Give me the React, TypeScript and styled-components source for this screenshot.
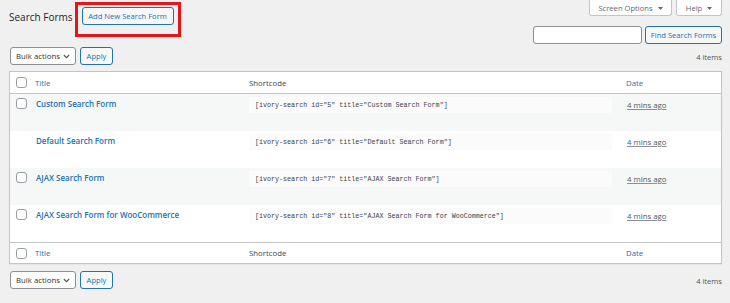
import React from "react";
import styled, { createGlobalStyle } from "styled-components";

const GlobalStyle = createGlobalStyle`
  html, body { margin: 0; padding: 0; background: #f0f0f1; }
  body {
    font-family: "Open Sans", "Noto Sans", sans-serif;
    color: #3c434a;
    font-size: 8px;
  }
  * { box-sizing: border-box; }
`

const forms = [
  { id: 5, title: "Custom Search Form", removable: true },
  { id: 6, title: "Default Search Form", removable: false },
  { id: 7, title: "AJAX Search Form", removable: true },
  { id: 8, title: "AJAX Search Form for WooCommerce", removable: true },
]

const Chevron = () => (
  <svg width="7" height="5" viewBox="0 0 7 5">
    <polyline points="0.8,1 3.5,3.7 6.2,1" fill="none" stroke="#50575e" strokeWidth="1.1" />
  </svg>
)

const Caret = () => (
  <svg width="5" height="3" viewBox="0 0 5 3">
    <polygon points="0,0 5,0 2.5,3" fill="#646970" />
  </svg>
)

const TableNav = ({ bottom }: { bottom?: boolean }) => (
  <NavRow $bottom={bottom}>
    <Select>
      Bulk actions <Chevron />
    </Select>
    <Button $w={33}>Apply</Button>
    <Count>4 items</Count>
  </NavRow>
)

const HeaderCells = () => (
  <>
    <CheckCell><Check /></CheckCell>
    <HeadCell $link>Title</HeadCell>
    <HeadCell>Shortcode</HeadCell>
    <HeadCell $link>Date</HeadCell>
  </>
)

const App = () => {
  return (
    <Page>
      <GlobalStyle />
      <Header>
        <TitleRow>
          <PageTitle>Search Forms</PageTitle>
          <Highlight>
            <Button $w={92}>Add New Search Form</Button>
          </Highlight>
        </TitleRow>
        <RightTools>
          <Tabs>
            <Tab $w={83}>Screen Options <Caret /></Tab>
            <Tab $w={46}>Help <Caret /></Tab>
          </Tabs>
          <SearchBox>
            <Input />
            <Button $w={77}>Find Search Forms</Button>
          </SearchBox>
        </RightTools>
      </Header>

      <TableNav />

      <Table>
        <HeadRow><HeaderCells /></HeadRow>
        {forms.map((f, i) => (
          <Row key={f.id} $striped={i % 2 === 0}>
            <CheckCell $top>{f.removable && <Check />}</CheckCell>
            <TitleCell>{f.title}</TitleCell>
            <CodeCell>
              <Code>[ivory-search id="{f.id}" title="{f.title}"]</Code>
            </CodeCell>
            <DateCell><Ago>4 mins ago</Ago></DateCell>
          </Row>
        ))}
        <HeadRow $foot><HeaderCells /></HeadRow>
      </Table>

      <TableNav bottom />
    </Page>
  )
}

const Page = styled.div`
  padding: 0 8px 0 9px;
`

const Header = styled.div`
  display: flex;
  justify-content: space-between;
  align-items: flex-start;
`

const TitleRow = styled.div`
  display: flex;
  align-items: flex-start;
`

const PageTitle = styled.h1`
  margin: 10px 2px 0 0;
  font-size: 10px;
  line-height: 14px;
  font-weight: 400;
  color: #1d2327;
`

const Highlight = styled.div`
  margin-top: 2px;
  border: 3px solid #e8141c;
  padding: 2px 4px 9px 4px;
`

const Button = styled.div<{ $w: number }>`
  width: ${p => p.$w}px;
  height: 18px;
  display: flex;
  align-items: center;
  justify-content: center;
  border: 1px solid #2271b1;
  border-radius: 3px;
  background: #f6f7f7;
  color: #2271b1;
  font-size: 7.6px;
  white-space: nowrap;
`

const RightTools = styled.div`
  display: flex;
  flex-direction: column;
  align-items: flex-end;
`

const Tabs = styled.div`
  display: flex;
  gap: 4px;
`

const Tab = styled.div<{ $w: number }>`
  width: ${p => p.$w}px;
  height: 16px;
  display: flex;
  align-items: center;
  justify-content: center;
  gap: 5px;
  background: #fff;
  border: 1px solid #c3c4c7;
  border-top: none;
  border-radius: 0 0 3px 3px;
  color: #646970;
  font-size: 7.6px;
  padding-top: 1px;
`

const SearchBox = styled.div`
  display: flex;
  gap: 3px;
  margin-top: 10px;
`

const Input = styled.div`
  width: 109px;
  height: 18px;
  background: #fff;
  border: 1px solid #8c8f94;
  border-radius: 3px;
`

const NavRow = styled.div<{ $bottom?: boolean }>`
  display: flex;
  align-items: center;
  gap: 4px;
  margin-top: ${p => (p.$bottom ? 7 : 3)}px;
  padding-left: 1px;
`

const Select = styled.div`
  width: 66px;
  height: 18px;
  display: flex;
  align-items: center;
  justify-content: space-between;
  padding: 0 5px 0 5px;
  background: #fff;
  border: 1px solid #8c8f94;
  border-radius: 3px;
  color: #2c3338;
  font-size: 7.8px;
`

const Count = styled.div`
  margin-left: auto;
  color: #50575e;
  font-size: 7.6px;
  padding-top: 1px;
`

const Table = styled.div`
  margin-top: 6px;
  background: #fff;
  border: 1px solid #c3c4c7;
  box-shadow: 0 1px 1px rgba(0, 0, 0, 0.04);
`

const grid = `
  display: grid;
  grid-template-columns: 21px 214px 377px 1fr;
`

const HeadRow = styled.div<{ $foot?: boolean }>`
  ${grid}
  height: ${p => (p.$foot ? 21 : 22)}px;
  align-items: center;
  ${p => (p.$foot ? "border-top: 1px solid #c3c4c7;" : "border-bottom: 1px solid #c3c4c7;")}
`

const HeadCell = styled.div<{ $link?: boolean }>`
  padding-left: 4px;
  color: ${p => (p.$link ? "#2271b1" : "#3c434a")};
  font-size: 7.8px;
`

const CheckCell = styled.div<{ $top?: boolean }>`
  display: flex;
  justify-content: flex-start;
  padding-left: 6px;
  align-self: ${p => (p.$top ? "start" : "center")};
  padding-top: ${p => (p.$top ? 4 : 0)}px;
`

const Check = styled.div`
  width: 11px;
  height: 11px;
  border: 1px solid #9a9da2;
  border-radius: 3px;
  background: #fff;
`

const Row = styled.div<{ $striped: boolean }>`
  ${grid}
  height: 37px;
  background: ${p => (p.$striped ? "#f6f7f7" : "#fff")};
`

const TitleCell = styled.div`
  padding: 3px 0 0 5px;
  color: #2271b1;
  font-weight: 600;
  font-size: 8px;
  line-height: 14px;
`

const CodeCell = styled.div`
  padding: 3px 10px 0 4px;
`

const Code = styled.div`
  height: 16px;
  display: flex;
  align-items: center;
  padding-left: 6px;
  background: #fbfbfb;
  font-family: "Liberation Mono", "DejaVu Sans Mono", monospace;
  font-size: 6.7px;
  color: #3c434a;
  white-space: nowrap;
`

const DateCell = styled.div`
  padding: 4px 0 0 5px;
  line-height: 14px;
`

const Ago = styled.span`
  color: #50575e;
  font-size: 7.8px;
  text-decoration: underline;
  text-decoration-color: #8c8f94;
`

export default App
